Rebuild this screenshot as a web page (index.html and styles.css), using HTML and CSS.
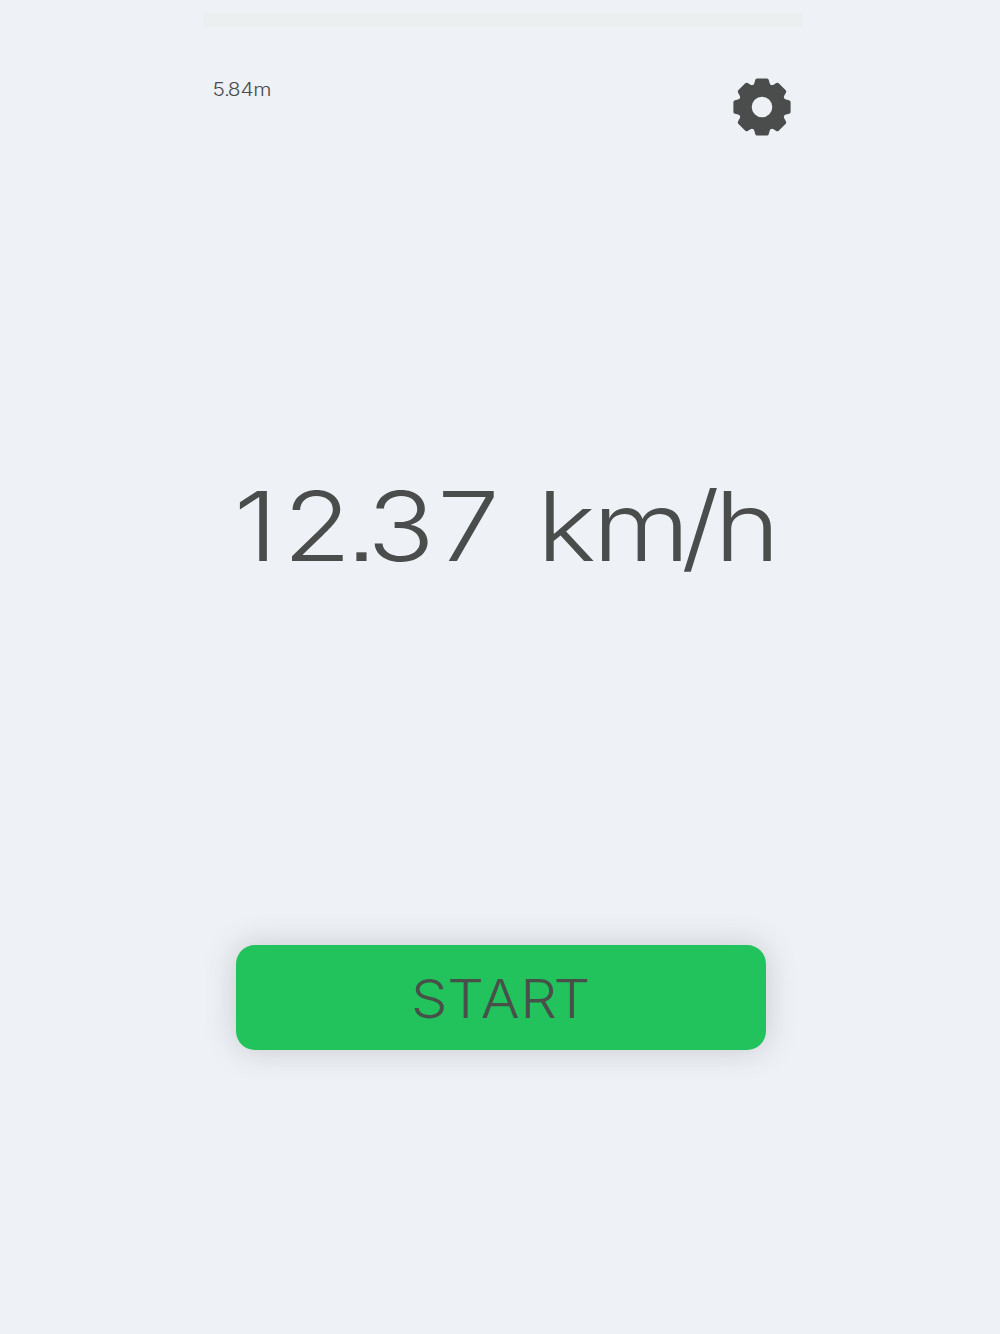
FILE: index.html
```html
<!DOCTYPE html>
<html lang="en">
<head>
<meta charset="utf-8">
<title>Speedometer</title>
<link rel="stylesheet" href="styles.css">
</head>
<body>
<main class="app">
  <div class="status-bar"></div>
  <header class="header">
    <svg class="accuracy" viewBox="0 0 70 30"><text transform="scale(1.16 1)" x="0.4 10.4 13.6 24.6 35.6" y="21">5.84m</text></svg>
    <svg class="gear" viewBox="-29 -29 58 58" role="img" aria-label="Settings">
      <defs><path id="tooth" d="M-9.4-21Q-8-22.5-7.6-24L-6.8-27Q-6.4-28.6-5-28.6H5Q6.4-28.6 6.8-27L7.6-24Q8-22.5 9.4-21Z"/></defs>
      <circle r="17" fill="none" stroke="currentColor" stroke-width="13.4"/>
      <g fill="currentColor">
        <use href="#tooth"/><use href="#tooth" transform="rotate(45)"/><use href="#tooth" transform="rotate(90)"/><use href="#tooth" transform="rotate(135)"/><use href="#tooth" transform="rotate(180)"/><use href="#tooth" transform="rotate(225)"/><use href="#tooth" transform="rotate(270)"/><use href="#tooth" transform="rotate(315)"/>
      </g>
    </svg>
  </header>
  <svg class="speed" viewBox="0 0 600 160"><text transform="scale(1.16 1)" x="26.5 69 123 141.5 202 260 288 336 412 441" y="111.5">12.37 km/h</text></svg>
  <button class="start"><svg class="start-label" viewBox="0 0 200 80"><text transform="scale(1.07 1)" x="9.4 43.2 74.6 111.4 142.6" y="60">START</text></svg></button>
</main>
</body>
</html>
```
FILE: styles.css
```css
body {
  margin: 0;
  background: #eef1f6;
  color: #4a4d4b;
  font-family: Inter, "Liberation Sans", sans-serif;
  font-feature-settings: "ss07" 1;
}
.app {
  display: flex;
  flex-direction: column;
  width: 600px;
  height: 1334px;
  margin-left: 203px;
}
.status-bar {
  height: 14px;
  margin-top: 12.5px;
  background: #ebefef;
}
.header {
  display: flex;
  justify-content: space-between;
  align-items: flex-start;
  height: 58px;
  margin-top: 51.5px;
  padding: 0 12px 0 9px;
}
svg {
  display: block;
  overflow: visible;
}
text {
  fill: currentColor;
}
.accuracy {
  width: 70px;
  height: 30px;
  margin-top: -3px;
  font-size: 18px;
  font-weight: 300;
}
.gear {
  width: 58px;
  height: 58px;
}
.speed {
  width: 600px;
  height: 160px;
  margin-top: 314px;
  font-size: 96px;
  font-weight: 300;
}
.start {
  display: flex;
  justify-content: center;
  align-items: center;
  width: 530px;
  height: 105px;
  margin: 335px 0 0 33px;
  padding: 0;
  border: 0;
  border-radius: 19px;
  background: #22c35d;
  color: #475149;
  font-family: inherit;
  font-feature-settings: inherit;
  box-shadow: 0 0 30px rgba(80, 90, 90, 0.25);
}
.start-label {
  width: 200px;
  height: 80px;
  font-size: 54px;
  font-weight: 300;
}
```
